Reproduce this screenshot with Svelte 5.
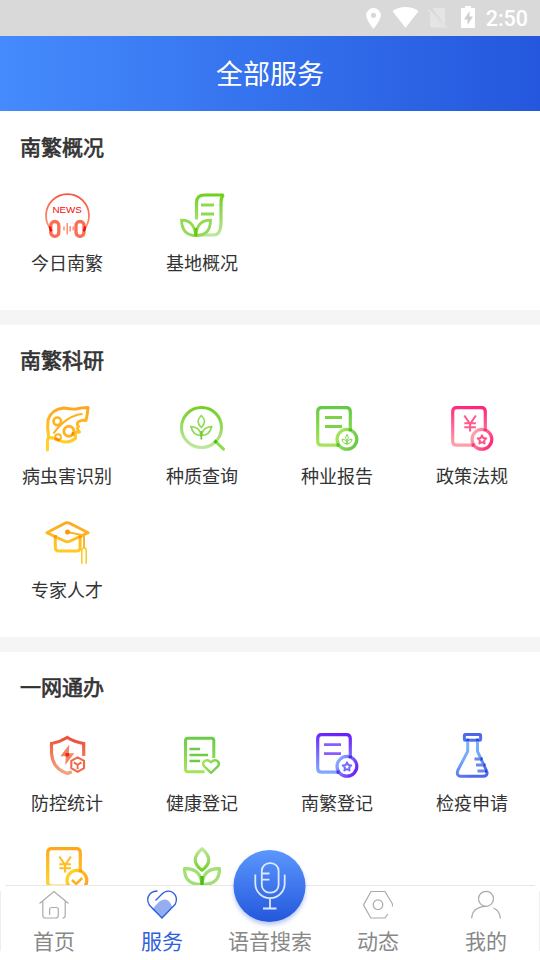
<script>
  const sections = [
    {
      title: '南繁概况',
      items: [
        { icon: 'news', label: '今日南繁' },
        { icon: 'scroll', label: '基地概况' }
      ]
    },
    {
      title: '南繁科研',
      items: [
        { icon: 'leaf', label: '病虫害识别' },
        { icon: 'search', label: '种质查询' },
        { icon: 'report', label: '种业报告' },
        { icon: 'policy', label: '政策法规' },
        { icon: 'cap', label: '专家人才' }
      ]
    },
    {
      title: '一网通办',
      items: [
        { icon: 'shield', label: '防控统计' },
        { icon: 'health', label: '健康登记' },
        { icon: 'register', label: '南繁登记' },
        { icon: 'flask', label: '检疫申请' },
        { icon: 'fee', label: '' },
        { icon: 'sprout', label: '' }
      ]
    }
  ];
  const tabs = [
    { icon: 'home', label: '首页' },
    { icon: 'service', label: '服务', active: true },
    { icon: 'voice', label: '语音搜索' },
    { icon: 'trend', label: '动态' },
    { icon: 'me', label: '我的' }
  ];
  const gradients = [
    { id: 'red', a: '#fb4f3c', b: '#fba079' },
    { id: 'green', a: '#6fd01c', b: '#bce69a' },
    { id: 'lime', a: '#62c845', b: '#a6e45a' },
    { id: 'orange', a: '#ffa51f', b: '#ffd426' },
    { id: 'pink', a: '#ff2478', b: '#ffa0ac' },
    { id: 'purple', a: '#6a1cff', b: '#82a8ff' },
    { id: 'blue', a: '#4a63ec', b: '#78b2ff' },
    { id: 'brick', a: '#ec4434', b: '#f6a37a' }
  ];
</script>

{#snippet doc(color, dark)}
  <path d="M35.300 23V5.700q0-4-4-4H6.700q-4 0-4 4v29.500q0 4 4 4h16.500" stroke="url(#{color})" stroke-width="3.200" />
  <circle cx="31.900" cy="33.300" r="9.900" stroke="url(#{color}-r)" stroke-width="3.200" />
  <path d="M35.300 22.600v2.700M21.600 39.200h2.800" stroke={dark} stroke-width="3.200" opacity=".75" />
{/snippet}

{#snippet yen(color)}
  <path d="M14.300 9.500l5.800 8.500 5.800-8.500M20.100 18v7.500M14.300 17.300h11.600M14.300 21.300h11.600" stroke={color} stroke-width="2.100" />
{/snippet}

{#snippet star(color)}
  <path d="M32 29.300l1.300 2.700 3 .4-2.200 2.100.5 3-2.600-1.400-2.600 1.400.5-3-2.200-2.100 3-.4z" stroke={color} stroke-width="1.900" stroke-linejoin="round" />
{/snippet}

<svg class="defs" aria-hidden="true">
  <defs>
    {#each gradients as g}
      <linearGradient id={g.id} gradientUnits="userSpaceOnUse" x1="22" y1="0" x2="18" y2="40">
        <stop offset="0" stop-color={g.a} />
        <stop offset="1" stop-color={g.b} />
      </linearGradient>
      <linearGradient id="{g.id}-r" gradientUnits="userSpaceOnUse" x1="24" y1="27" x2="42" y2="38">
        <stop offset="0" stop-color={g.b} />
        <stop offset="1" stop-color={g.a} />
      </linearGradient>
    {/each}
    <linearGradient id="blue-v" gradientUnits="userSpaceOnUse" x1="10" y1="8" x2="24" y2="43">
      <stop offset="0" stop-color="#7ab8ff" />
      <stop offset=".5" stop-color="#75a8fc" />
      <stop offset="1" stop-color="#4e68ec" />
    </linearGradient>
    <linearGradient id="petal" x1="0" y1="0" x2="0" y2="1">
      <stop offset="0" stop-color="#bde79d" />
      <stop offset="1" stop-color="#75d02c" />
    </linearGradient>
    <linearGradient id="mic" x1="0" y1="0" x2="0" y2="1">
      <stop offset="0" stop-color="#5b97fc" />
      <stop offset="1" stop-color="#2457dd" />
    </linearGradient>
  </defs>
</svg>

<div class="screen">
  <div class="status">
    <svg width="112" height="36" viewBox="362 0 112 36">
      <path d="M373.500 8a7.300 7.300 0 0 0-7.300 7.300c0 5.200 7.300 13.700 7.300 13.700s7.300-8.500 7.300-13.700A7.300 7.300 0 0 0 373.500 8zm0 4.700a2.600 2.600 0 1 1 0 5.200 2.600 2.600 0 0 1 0-5.200z" fill="#fff" />
      <path d="M405.500 27.700L392.500 11.300c7-5.600 19-5.600 26 0z" fill="#fff" />
      <path d="M432.500 8H443q2 0 2 2v15.500zM430 12.500l14.500 15H432q-2 0-2-2z" fill="#e5e5e5" />
      <path d="M428.200 9.500l18.300 18.500" stroke="#e5e5e5" stroke-width="1.600" />
      <path d="M465 6h6v2h4v20h-14V8h4z" fill="#fff" />
      <path d="M469.500 11l-5.500 8.500h3.500V25l5.500-8.500h-3.500z" fill="#cfcfcf" />
    </svg>
    <span>2:50</span>
  </div>
  <header>全部服务</header>
  <main>
    {#each sections as section}
      <section>
        <h2>{section.title}</h2>
        <div class="grid">
          {#each section.items as item}
            <div class="item">
              <svg width="45" height="45" viewBox="0 0 45 45" fill="none">
                {#if item.icon === 'news'}
                  <path d="M6.500 37A21.500 21.500 0 1 1 38.500 37" stroke="url(#red)" stroke-width="1.800" />
                  <rect x="5.800" y="28.500" width="8" height="14.800" rx="3.800" stroke="#fb6e55" stroke-width="3.300" />
                  <rect x="31" y="28.500" width="8" height="14.800" rx="3.800" stroke="#fb6e55" stroke-width="3.300" />
                  <path d="M4.800 33.500q.3 3 1.800 4.800M40.200 33.500q-.3 3-1.800 4.800" stroke="#f50a0a" stroke-width="2.400" />
                  <path d="M19 33.500v4M22.200 30v11.500M25.200 33v5.500M28.200 33.500v4" stroke="#fb8060" stroke-width="1.300" />
                  <text x="22.200" y="19.800" text-anchor="middle" font-size="9.800" fill="#f20d0d">NEWS</text>
                {:else if item.icon === 'scroll'}
                  <path d="M16.500 26.500V10q0-8 8-8H43.500q-2.500 2-2.500 7V30q-.5 12-7 12H17" stroke="url(#green)" stroke-width="3.200" stroke-linejoin="bevel" />
                  <path d="M21 12h13M21 21h13" stroke="#8fd94f" stroke-width="2.800" />
                  <path d="M15.800 42.500Q2 42.500 1.600 27.200 14 27 15.800 42.500zM15.800 42.500Q17 27 30.500 27.200 30.500 42.500 15.800 42.500z" stroke="#93da55" stroke-width="2.800" />
                  <path d="M15.800 35v8.500" stroke="#63cc08" stroke-width="3" />
                {:else if item.icon === 'leaf'}
                  <path d="M2.500 44V34l1.200-2.500Q2 22 3 14 6.500 3 19 2q7 1.500 12 1Q37 1.500 43 1.500q-.5 7-2 13-4-1-7.500 1.300-2.500 2 0 4.700-2.500 2 1 5.500l-3.500.5q-1.500 2.500-.5 6Q22 38.500 14 34.500 8 31 3.500 31.500" stroke="url(#orange)" stroke-width="3" stroke-linejoin="round" stroke-linecap="round" />
                  <circle cx="12.300" cy="15.300" r="3.800" stroke="#ffb321" stroke-width="2.600" />
                  <circle cx="23.900" cy="25.300" r="5" stroke="#ffb421" stroke-width="2.900" />
                  <circle cx="13" cy="31.200" r="3" stroke="#ffb71f" stroke-width="1.900" />
                  <path d="M8.500 27.500C16 17 25 9 37.500 8" stroke="#ffae20" stroke-width="2" />
                  <path d="M10 32.500l4.800 1.700M28.300 26l-1 3.500" stroke="#ff8a00" stroke-width="2.700" />
                {:else if item.icon === 'search'}
                  <circle cx="21.500" cy="21.500" r="20" stroke="url(#green)" stroke-width="3" />
                  <path d="M35.500 35.500l8 7.700" stroke="#8edb4d" stroke-width="3" stroke-linecap="round" />
                  <path d="M34.500 34.500l2.200 2.200" stroke="#4cbf08" stroke-width="3.200" />
                  <g stroke="#91da56" stroke-width="1.700">
                    <path d="M21.300 9.500q-6.500 6 0 12 6.500-6 0-12z" />
                    <path d="M21.300 29.500Q13 29.500 11 20.700q8.500.2 10.300 8.800zM21.300 29.500q8.300 0 10.300-8.800-8.500.2-10.300 8.800z" />
                    <path d="M21.300 25v8.500" stroke="#68c92b" />
                  </g>
                {:else if item.icon === 'report'}
                  {@render doc('lime', '#36b91a')}
                  <path d="M10 11.500h17M10 20.500h17" stroke="#7ed24b" stroke-width="2.900" />
                  <g stroke="#81d650" stroke-width="1">
                    <path d="M32 28.500q-3 3.200 0 6.500 3-3.300 0-6.500zM32 37.700q-4.500 0-5-4.500 4.500 0 5 4.500zM32 37.700q4.500 0 5-4.500-4.500 0-5 4.500zM32 35v4" />
                  </g>
                {:else if item.icon === 'policy'}
                  {@render doc('pink', '#ff176b')}
                  {@render yen('#ff5b8e')}
                  {@render star('#ff5288')}
                {:else if item.icon === 'cap'}
                  <path d="M10.300 15v12.500q0 3.500 3.500 3.500h18q3.300 0 3.300-3.500V15" stroke="url(#orange)" stroke-width="3" />
                  <path d="M1.800 12.700L20 3.200q2.300-1.200 4.700 0l18.500 9.500-18.500 8.500q-2.400 1.100-4.700 0z" stroke="url(#orange)" stroke-width="2.900" stroke-linejoin="round" />
                  <path d="M10.300 15.300v3M35.100 15.500v2.500" stroke="#ff960a" stroke-width="3" />
                  <path d="M22.500 12l16.500 3.500v12.700" stroke="#ffb31c" stroke-width="1.900" />
                  <circle cx="22.500" cy="12" r="2.500" fill="#ff950b" />
                  <path d="M36.800 43.700V30q0-2 2.200-2t2.200 2v13.700" stroke="#ffc61f" stroke-width="1.500" />
                {:else if item.icon === 'shield'}
                  <path d="M38.700 23V10.500Q29.500 9 22.300 4.500 15 9 6.500 10.500V20Q7.500 36 22.500 40.500l4.300-1.800" stroke="url(#brick)" stroke-width="3.200" />
                  <path d="M24.300 11.500L15.300 23.300h5.500L20.300 32 29.300 20.300h-5.500z" fill="#f28460" />
                  <path d="M20.500 20h3.500v3.500h-3.500z" fill="#f0281c" />
                  <path d="M32.600 24.400l6.400 3.500v7.300l-6.400 3.600-6.300-3.600v-7.300z" stroke="#ef6a49" stroke-width="2.100" />
                  <path d="M28.800 29.400l3.800 2.400 3.900-2.400M32.600 31.800v4.500" stroke="#ef6a49" stroke-width="1.900" />
                {:else if item.icon === 'health'}
                  <path d="M33.800 25V7.500q0-2.300-2.300-2.300H8q-2.500 0-2.500 2.500v28.500q0 2.500 2.500 2.500h16.500" stroke="url(#lime)" stroke-width="3" />
                  <path d="M9.500 16H20M9.500 22H28M9.500 28H20" stroke="#6ecb46" stroke-width="2.400" />
                  <path d="M31 39.800l-6.700-6.500q-2.300-2.800 0-5 3.500-2.500 6.700 1 3.300-3.500 6.800-1 2.300 2.200 0 5z" stroke="url(#lime-r)" stroke-width="2.400" stroke-linejoin="round" />
                {:else if item.icon === 'register'}
                  {@render doc('purple', '#3f0de0')}
                  <path d="M9 11.600h17M9 20.700h17" stroke="#895cff" stroke-width="2.800" />
                  {@render star('#716eff')}
                {:else if item.icon === 'flask'}
                  <rect x="14.400" y="1.600" width="16.200" height="5.600" rx=".8" stroke="url(#blue)" stroke-width="3" />
                  <path d="M17.700 6v12.500L8 37q-2.500 6.300 4 6.300h20.500q6.500 0 3.700-6.300L27.500 18.500V6" stroke="url(#blue-v)" stroke-width="3" />
                  <path d="M24.500 26h8M26 32h9M27.500 38h8" stroke="#6b86ef" stroke-width="2.900" />
                  <path d="M17.700 5.800v2.500M27.500 5.800v2.500M30.500 26h2M33.500 32h2M35 38h2" stroke="#2446d8" stroke-width="2.900" />
                {:else if item.icon === 'fee'}
                  {@render doc('orange', '#ff950a')}
                  {@render yen('#ffbd20')}
                  <path d="M27 33l4.200 4 6-6" stroke="#ffb11d" stroke-width="2.500" />
                {:else if item.icon === 'sprout'}
                  <path d="M22 1.800Q8.500 13.500 22 23.200 35.500 13.500 22 1.800z" stroke="url(#petal)" stroke-width="3.200" stroke-linejoin="round" />
                  <path d="M22 37.500Q4.500 38 4.500 21.700 20.500 21 22 37.500zM22 37.500Q39.500 38 39.500 21.700 23.500 21 22 37.500z" stroke="#a2df76" stroke-width="3.200" stroke-linejoin="round" />
                  <path d="M22 29v9.500" stroke="#4dbd10" stroke-width="3.300" />
                {/if}
              </svg>
              <span>{item.label}</span>
            </div>
          {/each}
        </div>
      </section>
    {/each}
  </main>
  <nav>
    {#each tabs as tab}
      <div class="tab" class:active={tab.active}>
        {#if tab.icon === 'voice'}
          <svg class="mic" width="76" height="76" viewBox="0 0 76 76" fill="none">
            <circle cx="37.500" cy="36" r="36" fill="url(#mic)" />
            <g stroke="#dbe9ff" stroke-width="1.800">
              <rect x="29.800" y="13.200" width="16.800" height="29.500" rx="7.800" />
              <path d="M23.300 24.500v9a14.700 14.700 0 0 0 29.400 0v-9M38 48.500v10M31 58.500h13.500M30 23.500h7.500M30 29.700h7.500" />
            </g>
          </svg>
        {:else}
          <svg width="30" height="30" viewBox="0 0 30 30" fill="none" stroke="#aaa" stroke-width="1.200">
            {#if tab.icon === 'home'}
              <path d="M.500 13.500L15 1.500l14.500 12M3.800 11.500V25.500q0 2.500 2.500 2.500h10.500q2.500 0 2.500-2.500v-6q0-2-2-2h-4.500q-2.200 0-2.200 2V25M23.500 28q2.700 0 2.700-2.500V11.500" />
            {:else if tab.icon === 'service'}
              <path d="M5.500 19.500C9 14.500 13 9.500 18.500 9.500q4.500.5 6.800 8L15 28z" fill="#94aef1" stroke="none" />
              <path d="M8.500 10.500L14.500 4.500q5-5.500 11-2.200 6 4.500 2.700 12L15 28 2.300 15Q-1 9 2.500 4.500 5.500 1 10.500 1" stroke="#2c60dc" stroke-width="1.300" />
            {:else if tab.icon === 'trend'}
              <path d="M29.500 16.500V14L22 1.500H8L.8 14.500v1L7.800 28H22l2.800-4" />
              <circle cx="15" cy="14.700" r="4.800" />
            {:else}
              <circle cx="15" cy="8.800" r="7.500" />
              <path d="M.7 28.500Q1 17 15 16.300M22.500 18Q29 21 29.400 28.500" />
            {/if}
          </svg>
        {/if}
        <span>{tab.label}</span>
      </div>
    {/each}
  </nav>
</div>

<style>
  :global(body) {
    margin: 0;
  }
  .defs {
    position: absolute;
    width: 0;
    height: 0;
  }
  .screen {
    width: 540px;
    height: 960px;
    overflow: hidden;
    display: flex;
    flex-direction: column;
    background: #f5f5f5;
    color: #333;
    font-family: 'Noto Sans CJK SC', sans-serif;
  }
  .status {
    height: 36px;
    flex: none;
    display: flex;
    align-items: center;
    justify-content: flex-end;
    gap: 12px;
    padding-right: 12px;
    background: #d9d9d9;
    color: #fff;
    font: 500 21.500px/36px Roboto, sans-serif;
  }
  .status span {
    padding-top: 2px;
  }
  .status svg {
    overflow: visible;
  }
  header {
    height: 75px;
    flex: none;
    background: linear-gradient(90deg, #458bfd, #2457dd);
    color: #fff;
    font-size: 27px;
    line-height: 73px;
    text-align: center;
  }
  main {
    flex: 1;
    min-height: 0;
    overflow: hidden;
    display: flex;
    flex-direction: column;
    gap: 15px;
  }
  section {
    flex: none;
    background: #fff;
    padding: 19px 0 24px;
  }
  section:first-child {
    padding-top: 20px;
  }
  h2 {
    margin: 0 0 32px 20px;
    font-size: 21px;
    line-height: 30px;
    font-weight: 400;
    -webkit-text-stroke: 0.7px #333;
  }
  .grid {
    display: grid;
    grid-template-columns: repeat(4, 135px);
    row-gap: 21px;
  }
  .item {
    height: 93px;
    display: flex;
    flex-direction: column;
    align-items: center;
    font-size: 18px;
    line-height: 27px;
  }
  .item svg {
    display: block;
    margin-bottom: 11px;
    overflow: visible;
  }
  .item span {
    padding-right: 1px;
  }
  .item text {
    font-family: 'Liberation Sans', sans-serif;
  }
  nav {
    height: 75px;
    flex: none;
    display: flex;
    background:
      linear-gradient(#e8e8e8, #e8e8e8) 50% 0 / 530px 1px no-repeat,
      linear-gradient(#eee, #eee) 0 6px / 1px 60px no-repeat,
      linear-gradient(#eee, #eee) 100% 6px / 1px 60px no-repeat,
      #fff;
  }
  .tab {
    flex: 1;
    display: flex;
    flex-direction: column;
    align-items: center;
    padding-top: 5px;
    color: #888;
    font-size: 21px;
    line-height: 30px;
    white-space: nowrap;
  }
  .tab svg {
    display: block;
    margin-bottom: 5px;
  }
  .tab .mic {
    margin: -40px 0 -1px;
    overflow: visible;
    filter: drop-shadow(0 3px 2px #4a75e266);
  }
  .tab.active {
    color: #2c60dc;
  }
</style>
